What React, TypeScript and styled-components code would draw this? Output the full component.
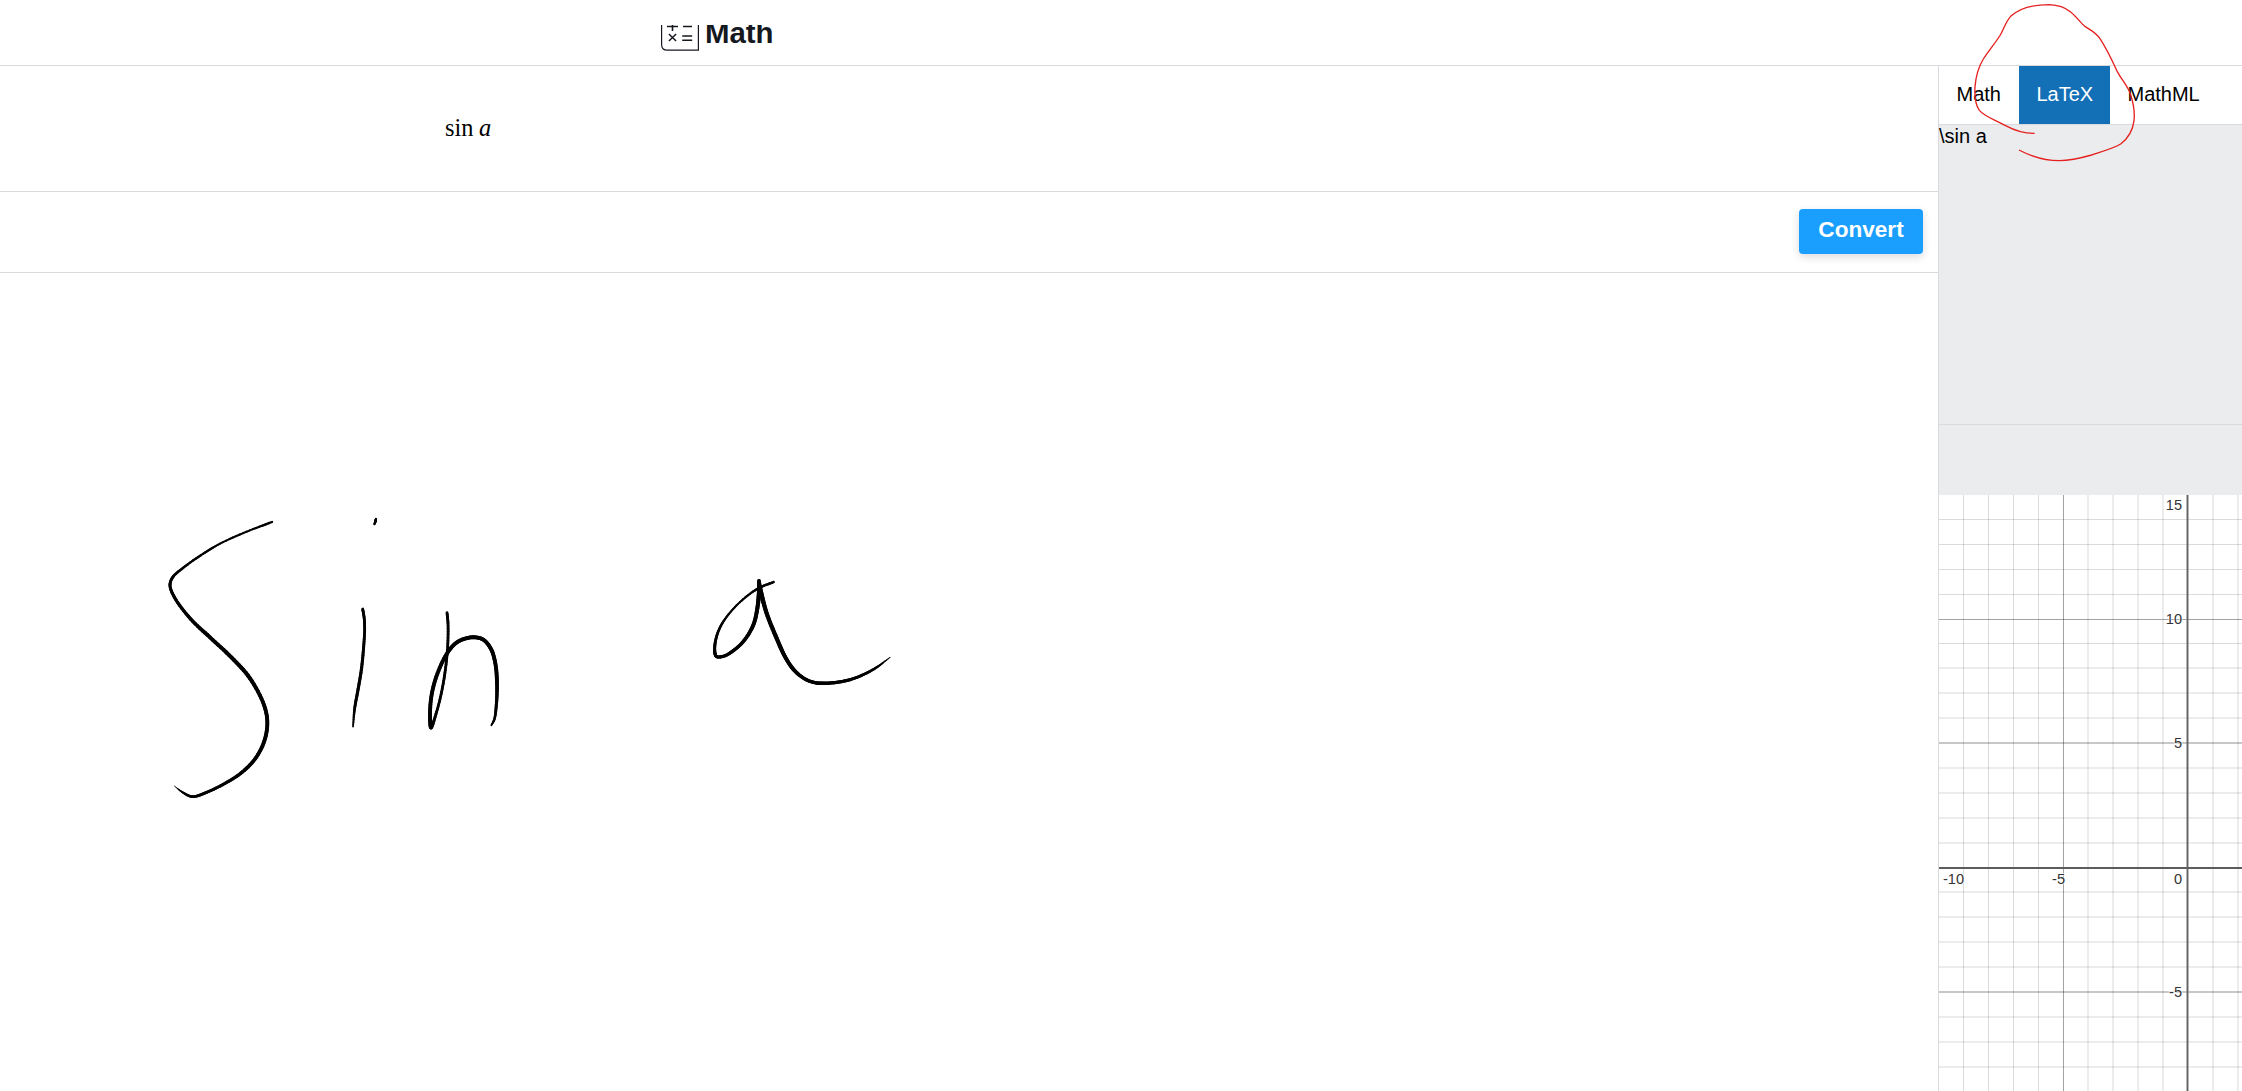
import React from "react";
import styled, { createGlobalStyle } from "styled-components";

const LINE = "#d9dadd";

const GlobalStyle = createGlobalStyle`
  *, *::before, *::after { box-sizing: border-box; }
  html, body { margin: 0; padding: 0; }
  body {
    background: #fff;
    color: #000;
    font-family: "Liberation Sans", Arial, sans-serif;
    overflow: hidden;
  }
`;

const Page = styled.div`
  position: relative;
  display: flex;
  flex-direction: column;
  width: 2242px;
  height: 1091px;
  overflow: hidden;
  background: #fff;
`;

const Header = styled.header`
  height: 66px;
  flex: none;
  border-bottom: 1px solid ${LINE};
  padding: 25px 0 0 661px;
`;

const Brand = styled.div`
  display: flex;
  align-items: flex-end;
  gap: 6px;
  height: 26px;
  overflow: hidden;
`;

const BrandIcon = styled.svg`
  display: block;
  flex: none;
`;

const BrandName = styled.h1`
  margin: 0;
  padding-bottom: 2px;
  font-size: 29.4px;
  line-height: 33px;
  font-weight: 700;
  color: #15191f;
`;

const Body = styled.div`
  display: flex;
  flex: 1;
  min-height: 0;
`;

const Editor = styled.main`
  display: flex;
  flex-direction: column;
  width: 1938px;
  flex: none;
`;

const Preview = styled.section`
  height: 126px;
  flex: none;
  border-bottom: 1px solid ${LINE};
  padding: 48px 0 0 445px;
  font-family: "Liberation Serif", "Times New Roman", serif;
  font-size: 24.4px;
  line-height: 28px;
  display: flex;
  gap: 5.5px;
`;

const Variable = styled.i`
  font-style: italic;
`;

const ActionBar = styled.section`
  display: flex;
  justify-content: flex-end;
  height: 81px;
  flex: none;
  border-bottom: 1px solid ${LINE};
  padding: 17px 15px 0 0;
`;

const ConvertButton = styled.button`
  width: 124px;
  height: 45px;
  border: 0;
  border-radius: 4px;
  padding: 0 0 3px;
  background: #1a9fff;
  color: #fff;
  font: 700 22.6px/26px "Liberation Sans", Arial, sans-serif;
  box-shadow: 0 3px 9px rgba(0, 0, 0, 0.14);
`;

const Ink = styled.svg`
  display: block;
  flex: 1;
  width: 1938px;
`;

const Side = styled.aside`
  display: flex;
  flex-direction: column;
  flex: 1;
  min-width: 0;
  border-left: 1px solid ${LINE};
  background: #ebecee;
`;

const Tabs = styled.nav`
  display: flex;
  height: 59px;
  flex: none;
  border-bottom: 1px solid ${LINE};
  background: #fff;
`;

const Tab = styled.div<{ $active?: boolean; $width: number }>`
  width: ${(p) => p.$width}px;
  height: 58px;
  padding: 0 0 0 17.5px;
  font-size: 20px;
  line-height: 57px;
  white-space: nowrap;
  color: ${(p) => (p.$active ? "#fff" : "#000")};
  background: ${(p) => (p.$active ? "#1370b7" : "transparent")};
`;

const Output = styled.div`
  height: 300px;
  flex: none;
  border-bottom: 1px solid ${LINE};
  font-size: 20px;
  line-height: 23px;
`;

const Spacer = styled.div`
  height: 70px;
  flex: none;
`;

const Graph = styled.svg`
  display: block;
  width: 303px;
  height: 596px;
  background: #fff;
  font-family: "Liberation Sans", Arial, sans-serif;
  font-size: 14.6px;
`;

const AxisLabel = styled.text`
  fill: #333;
  stroke: #fff;
  stroke-width: 2px;
  stroke-opacity: 0.6;
  paint-order: stroke;
`;

const Annotation = styled.svg`
  position: absolute;
  left: 1960px;
  top: 0;
  pointer-events: none;
`;

/* Handwriting: each sample is [x, y, pen width], in thirds of a pixel from the stroke's origin. */
type Sample = [number, number, number];
type Stroke = { x: number; y: number; samples: Sample[] };

const PRESSURE = 1.04;

const strokes: Stroke[] = [
  {
    x: 150,
    y: 500,
    samples: [
      [366, 66, 7], [290, 95, 6], [210, 131, 6], [160, 161, 6.5], [100, 203, 7], [68, 232, 8],
      [60, 256, 8.5], [74, 293, 9], [122, 357, 10], [180, 412, 11], [245, 473, 11.5], [300, 535, 11.5],
      [342, 615, 11], [352, 667, 11], [343, 723, 11], [315, 777, 10.5], [272, 820, 10], [225, 850, 9],
      [170, 877, 8.5], [127, 890, 8], [98, 877, 6], [73, 858, 2],
    ],
  },
  { x: 330, y: 500, samples: [[138, 57, 6.5], [136, 65, 7], [133, 73, 5.5]] },
  {
    x: 330,
    y: 500,
    samples: [
      [98, 327, 8], [102, 350, 8], [104, 385, 8], [101, 440, 8.5], [94, 510, 9],
      [83, 575, 9], [74, 625, 8], [69, 680, 5],
    ],
  },
  {
    x: 330,
    y: 500,
    samples: [
      [351, 338, 8], [354, 370, 8], [353, 440, 8], [346, 510, 8], [335, 575, 8], [320, 635, 8],
      [303, 683, 10], [300, 650, 11], [304, 590, 11], [319, 530, 11], [350, 462, 11], [378, 429, 11],
      [408, 415, 11], [435, 412, 11], [460, 419, 11], [483, 447, 11], [496, 490, 11], [501, 550, 11],
      [499, 615, 9], [493, 658, 7], [484, 676, 5],
    ],
  },
  {
    x: 690,
    y: 560,
    samples: [
      [251, 66, 7], [205, 85, 7], [165, 113, 6], [125, 152, 6], [95, 193, 7], [79, 232, 8],
      [74, 272, 9], [79, 289, 9], [100, 289, 9], [130, 272, 9.5], [162, 242, 10], [190, 195, 11],
      [202, 145, 11.5], [207, 95, 12], [207, 62, 10],
    ],
  },
  {
    x: 690,
    y: 560,
    samples: [
      [207, 62, 9], [214, 100, 12], [230, 160, 12], [260, 235, 12], [285, 290, 11.5], [312, 330, 11],
      [345, 357, 10], [375, 368, 10], [400, 370, 10], [440, 367, 9.5], [480, 359, 9], [522, 343, 8],
      [560, 322, 7], [600, 292, 3],
    ],
  },
];

const mix = (a: Sample, b: Sample, ta: number, tb: number, t: number): Sample => {
  const k = (t - ta) / (tb - ta);
  return [a[0] + (b[0] - a[0]) * k, a[1] + (b[1] - a[1]) * k, a[2] + (b[2] - a[2]) * k];
};

const mirror = (a: Sample, b: Sample): Sample => [2 * a[0] - b[0], 2 * a[1] - b[1], a[2]];

/* Centripetal Catmull-Rom through the samples, so that uneven spacing makes no kinks. */
function densify({ x, y, samples }: Stroke): Sample[] {
  const n = samples.length;
  const p = [mirror(samples[0], samples[1]), ...samples, mirror(samples[n - 1], samples[n - 2])];
  const out: Sample[] = [];
  const push = (s: Sample) => out.push([x + s[0] / 3, y + s[1] / 3, (s[2] * PRESSURE) / 3]);
  const knot = (t: number, a: Sample, b: Sample) => t + Math.sqrt(Math.hypot(b[0] - a[0], b[1] - a[1]));
  for (let i = 1; i < n; i++) {
    const [p0, p1, p2, p3] = [p[i - 1], p[i], p[i + 1], p[i + 2]];
    const t0 = 0;
    const t1 = knot(t0, p0, p1);
    const t2 = knot(t1, p1, p2);
    const t3 = knot(t2, p2, p3);
    for (let s = 0; s < 8; s++) {
      const t = t1 + ((t2 - t1) * s) / 8;
      const a1 = mix(p0, p1, t0, t1, t);
      const a2 = mix(p1, p2, t1, t2, t);
      const a3 = mix(p2, p3, t2, t3, t);
      push(mix(mix(a1, a2, t0, t2, t), mix(a2, a3, t1, t3, t), t1, t2, t));
    }
  }
  push(samples[n - 1]);
  return out;
}

/* A stroke becomes short round-capped segments, each as wide as the pen was there. */
function InkStroke({ stroke }: { stroke: Stroke }) {
  const pts = densify(stroke);
  return (
    <g stroke="#000" strokeLinecap="round">
      {pts.slice(1).map(([x, y, w], i) => (
        <line key={i} x1={pts[i][0]} y1={pts[i][1]} x2={x} y2={y} strokeWidth={w} />
      ))}
    </g>
  );
}

type GridLine = { at: number; soft?: boolean; major?: boolean };

const columns: GridLine[] = [
  { at: 1963.5 }, { at: 1988.5 }, { at: 2013.5 }, { at: 2038.5 }, { at: 2063.5, major: true },
  { at: 2088, soft: true }, { at: 2113, soft: true }, { at: 2138, soft: true }, { at: 2163, soft: true },
  { at: 2213, soft: true }, { at: 2238, soft: true },
];

const rows: GridLine[] = [
  { at: 519.5 }, { at: 544.5 }, { at: 569.5 }, { at: 594.5 }, { at: 619.5, major: true },
  { at: 643.5 }, { at: 668, soft: true }, { at: 693, soft: true }, { at: 718, soft: true },
  { at: 743, soft: true, major: true }, { at: 768, soft: true }, { at: 793, soft: true },
  { at: 818, soft: true }, { at: 843, soft: true }, { at: 892, soft: true }, { at: 917, soft: true },
  { at: 942, soft: true }, { at: 967, soft: true }, { at: 992, soft: true, major: true },
  { at: 1017, soft: true }, { at: 1042, soft: true }, { at: 1067, soft: true },
];

const lineLook = (l: GridLine) => ({
  strokeWidth: l.soft ? 2 : 1,
  stroke: "#000",
  strokeOpacity: l.major ? (l.soft ? 0.22 : 0.36) : l.soft ? 0.075 : 0.14,
});

const labels = [
  { text: "15", x: 2182, y: 510 },
  { text: "10", x: 2182, y: 624 },
  { text: "5", x: 2182, y: 748 },
  { text: "-5", x: 2182, y: 997 },
  { text: "0", x: 2182, y: 884 },
  { text: "-5", x: 2065, y: 884 },
  { text: "-10", x: 1964, y: 884 },
];

function GraphPaper() {
  return (
    <Graph viewBox="1939 495 303 596">
      {rows.map((l) => (
        <line key={l.at} x1="1939" x2="2242" y1={l.at} y2={l.at} {...lineLook(l)} />
      ))}
      {columns.map((l) => (
        <line key={l.at} y1="495" y2="1091" x1={l.at} x2={l.at} {...lineLook(l)} />
      ))}
      <line x1="1939" x2="2242" y1="868" y2="868" stroke="#5c5c5c" strokeWidth="1.8" />
      <line y1="495" y2="1091" x1="2187.5" x2="2187.5" stroke="#626262" strokeWidth="1.9" />
      {labels.map((l) => (
        <AxisLabel key={`${l.x}-${l.y}`} x={l.x} y={l.y} textAnchor="end">
          {l.text}
        </AxisLabel>
      ))}
    </Graph>
  );
}

export default function App() {
  return (
    <Page>
      <GlobalStyle />
      <Header>
        <Brand>
          <BrandIcon width="38" height="26" viewBox="661 25 38 26" fill="none" stroke="#15191f">
            <path d="M661.6 24v20.5q0 5.7 5.7 5.7H698.4V24" strokeWidth="1.2" />
            <path d="M667 26.5h11M672.5 25v6M683 26.5h9" strokeWidth="1.6" />
            <path d="M668.9 34l7.2 7M676.1 34l-7.2 7" strokeWidth="1.5" />
            <path d="M682.2 36h10M682.2 40.3h10" strokeWidth="1.6" />
          </BrandIcon>
          <BrandName>Math</BrandName>
        </Brand>
      </Header>
      <Body>
        <Editor>
          <Preview>
            <span>sin</span>
            <Variable>a</Variable>
          </Preview>
          <ActionBar>
            <ConvertButton>Convert</ConvertButton>
          </ActionBar>
          <Ink viewBox="0 273 1938 818">
            {strokes.map((s, i) => (
              <InkStroke key={i} stroke={s} />
            ))}
          </Ink>
        </Editor>
        <Side>
          <Tabs>
            <Tab $width={80}>Math</Tab>
            <Tab $width={91} $active>
              LaTeX
            </Tab>
            <Tab $width={108}>MathML</Tab>
          </Tabs>
          <Output>\sin a</Output>
          <Spacer />
          <GraphPaper />
        </Side>
      </Body>
      <Annotation width="190" height="170" viewBox="1960 0 190 170" fill="none">
        <path
          transform="translate(1920 0) scale(.33333)"
          d="M344 400C310 401 285 392 255 376C220 357 195 350 178 331C165 312 163 292 165 260C168 225 176 200 190 177C208 150 225 130 241 105C252 86 257 65 272 49C300 22 345 14 388 14C415 15 435 22 452 36C470 50 480 68 496 80C515 93 527 97 540 116C562 150 575 178 592 215C608 245 622 255 632 284C642 315 645 335 642 362C638 395 625 415 602 432C580 445 545 455 515 465C480 475 450 482 418 482C370 482 335 470 297 450"
          stroke="#e5201f"
          strokeWidth="4"
        />
      </Annotation>
    </Page>
  );
}
